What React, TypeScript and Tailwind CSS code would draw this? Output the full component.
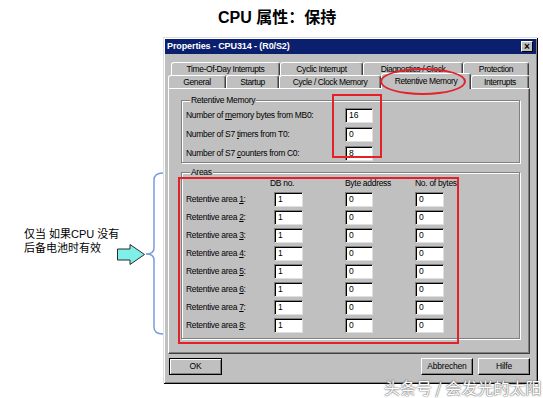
import React from 'react'

const sys = "font-['Liberation_Sans',sans-serif]"

const row1 = [
  { label: 'Time-Of-Day Interrupts', w: 'w-[109px]' },
  { label: 'Cyclic Interrupt', w: 'w-[83px]' },
  { label: 'Diagnostics / Clock', w: 'w-[100px]' },
  { label: 'Protection', w: 'w-[66px]' },
]

const row2 = [
  { label: 'General', w: 'w-[58px]' },
  { label: 'Startup', w: 'w-[53px]' },
  { label: 'Cycle / Clock Memory', w: 'w-[102px]' },
  { label: 'Retentive Memory', w: 'w-[90px]', active: true },
  { label: 'Interrupts', w: 'w-[58px]' },
]

function Tab({ label, w, active }: { label: string; w: string; active?: boolean }) {
  if (active) {
    return (
      <div className={`${w} h-[16px] -mb-[1px] relative z-10 bg-[#c0c0c0] border-t border-l border-white border-r border-r-[#404040] rounded-t-[3px] shadow-[inset_-1px_0_#808080] flex items-center justify-center text-[8.5px] tracking-[-0.4px] leading-none`}>
        {label}
      </div>
    )
  }
  return (
    <div className={`${w} h-[13px] bg-[#c0c0c0] border-t border-l border-white border-r border-r-[#404040] rounded-t-[3px] shadow-[inset_-1px_0_#808080] flex items-center justify-center text-[8.5px] tracking-[-0.4px] leading-none`}>
      {label}
    </div>
  )
}

function Field({ value, w }: { value: string; w: string }) {
  return (
    <div className={`${w} h-[15px] bg-white border border-t-[#808080] border-l-[#808080] border-r-[#dfdfdf] border-b-[#dfdfdf] shadow-[inset_1px_1px_#000] pl-[3px] text-[8.5px] leading-[13px]`}>
      {value}
    </div>
  )
}

function Button({ label, w, def }: { label: string; w: string; def?: boolean }) {
  return (
    <div
      className={`${w} h-[17px] flex items-center justify-center text-[8.5px] tracking-[-0.2px] bg-[#c0c0c0] ${
        def
          ? 'border border-black shadow-[inset_1px_1px_#fff,inset_-1px_-1px_#808080]'
          : 'border border-t-white border-l-white border-r-black border-b-black shadow-[inset_-1px_-1px_#808080]'
      }`}
    >
      {label}
    </div>
  )
}

function Group({ title, className, children }: { title: string; className: string; children: React.ReactNode }) {
  return (
    <fieldset className={`border border-[#808080] shadow-[inset_1px_1px_#fff,1px_1px_#fff] ${className}`}>
      <legend className="ml-[4px] px-[1px] bg-[#c0c0c0] text-[8.5px] tracking-[-0.3px] leading-[10px]">{title}</legend>
      {children}
    </fieldset>
  )
}

function Dialog() {
  return (
    <div className={`w-[375px] h-[347px] bg-[#c0c0c0] text-black ${sys} shadow-[inset_1px_1px_#dfdfdf,inset_-1px_-1px_#000,inset_2px_2px_#fff,inset_-2px_-2px_#808080] flex flex-col`}>
      {/* title bar */}
      <div className="mt-[2px] mx-[2px] h-[15px] bg-[#0a1f6e] flex items-center justify-between pl-[2px] pr-[3px]">
        <span className="text-white font-bold text-[9px] tracking-[-0.1px]">Properties - CPU314 - (R0/S2)</span>
        <div className="w-[12px] h-[11px] bg-[#c0c0c0] border border-t-white border-l-white border-r-black border-b-black flex items-center justify-center text-[10px] leading-none font-bold">
          ×
        </div>
      </div>

      {/* tabs */}
      <div className="mt-[8px] pl-[8px] flex">
        {row1.map((t) => (
          <Tab key={t.label} label={t.label} w={t.w} />
        ))}
      </div>
      <div className="pl-[5px] flex items-end h-[13px]">
        {row2.map((t) => (
          <Tab key={t.label} label={t.label} w={t.w} active={t.active} />
        ))}
      </div>

      {/* panel */}
      <div className="ml-[5px] mr-[8px] h-[266px] border border-t-white border-l-white border-r-[#404040] border-b-[#404040] shadow-[inset_-1px_-1px_#808080] pl-[12px] pr-[9px] flex flex-col">
        <Group title="Retentive Memory" className="mt-[6px] pt-[3px] pb-[1px] pl-[4px] flex flex-col gap-[4px]">
          {[
            { l: <>Number of <u>m</u>emory bytes from MB0:</>, v: '16' },
            { l: <>Number of S7 <u>t</u>imers from T0:</>, v: '0' },
            { l: <>Number of S7 <u>c</u>ounters from C0:</>, v: '8' },
          ].map((r, i) => (
            <div key={i} className="flex items-center h-[15px]">
              <div className="w-[159px] text-[8.5px] tracking-[-0.3px]">{r.l}</div>
              <Field value={r.v} w="w-[28px]" />
            </div>
          ))}
        </Group>

        <Group title="Areas" className="mt-[4px] pl-[4px] pb-[5px]">
          <div className="mt-[1px] h-[10px] flex text-[8.5px] tracking-[-0.3px] leading-[10px] whitespace-nowrap">
            <div className="w-[84px]" />
            <div className="w-[75px]">DB no.</div>
            <div className="w-[70px]">Byte address</div>
            <div>No. of bytes</div>
          </div>
          <div className="mt-[4px] flex flex-col gap-[3px]">
            {[1, 2, 3, 4, 5, 6, 7, 8].map((n) => (
              <div key={n} className="flex items-center h-[15px]">
                <div className="w-[88px] text-[8.5px] tracking-[-0.3px]">
                  Retentive area <u>{n}</u>:
                </div>
                <Field value="1" w="w-[29px]" />
                <div className="w-[42px]" />
                <Field value="0" w="w-[28px]" />
                <div className="w-[42px]" />
                <Field value="0" w="w-[29px]" />
              </div>
            ))}
          </div>
        </Group>
      </div>

      {/* buttons */}
      <div className="mt-[4px] pl-[6px] pr-[8px] flex">
        <Button label="OK" w="w-[53px]" def />
        <div className="flex-1" />
        <div className="flex gap-[5px]">
          <Button label="Abbrechen" w="w-[52px]" />
          <Button label="Hilfe" w="w-[52px]" />
        </div>
      </div>
    </div>
  )
}

export default function App() {
  return (
    <div className="relative w-[543px] h-[398px] bg-white overflow-hidden">
      <div className="h-[37px] pl-[218px] pt-[8px] text-[16px] leading-[20px] font-bold text-black font-['Liberation_Sans','Noto_Sans_CJK_SC',sans-serif]">
        CPU 属性：保持
      </div>

      <div className="flex">
        {/* annotation column */}
        <div className="w-[163px] pt-[135px] flex items-start">
          <div className="ml-[24px] w-[93px] mt-[55px] text-[11px] leading-[14px] whitespace-nowrap text-black font-['Liberation_Sans','Noto_Sans_CJK_SC',sans-serif]">
            仅当 如果CPU 没有
            <br />
            后备电池时有效
          </div>
          <svg className="mt-[72px]" width="28" height="21" viewBox="0 0 28 21">
            <polygon points="0.5,5 13,5 13,0.5 27.5,10.5 13,20.5 13,16 0.5,16" fill="#7fefe8" stroke="#2b2b2b" strokeWidth="1" />
          </svg>
          <svg width="18" height="163" viewBox="0 0 18 163">
            <path
              d="M18 1 Q9 1 9 8 L9 76 Q9 82 1 82 Q9 82 9 88 L9 155 Q9 162 18 162"
              fill="none"
              stroke="#7b9ae0"
              strokeWidth="1.5"
            />
          </svg>
        </div>

        <Dialog />
      </div>

      {/* red markup */}
      <div className="absolute z-20 left-[380px] top-[68px] w-[86px] h-[27px] border-2 border-[#e4202a] rounded-[50%]" />
      <div className="absolute z-20 left-[332px] top-[94px] w-[50px] h-[64px] border-2 border-[#e4202a]" />
      <div className="absolute z-20 left-[178px] top-[177px] w-[281px] h-[167px] border-2 border-[#e4202a]" />

      {/* watermark */}
      <div className="absolute z-20 left-[384px] top-[377px] text-[16px] leading-[20px] text-white font-['Noto_Sans_CJK_SC',sans-serif] [text-shadow:0_0_1px_#444,0_0_2px_#777]">
        头条号 / 会发光的太阳
      </div>
    </div>
  )
}
